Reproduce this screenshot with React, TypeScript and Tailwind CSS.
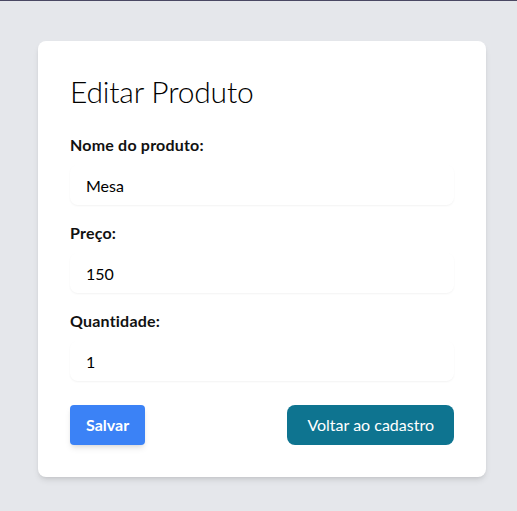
import React from "react";

export default function App() {
  return (
    <div
      className="min-h-[511px] bg-[#e5e7eb] border-t border-[#4a4863] pt-10 pl-[7px] flex justify-center"
      style={{ fontFamily: 'Lato, "Noto Sans", sans-serif' }}
    >
      <div className="w-[448px] h-fit bg-white rounded-lg shadow-md p-8">
        <h1 className="text-3xl font-light text-black mb-6 tracking-[-0.2px]">Editar Produto</h1>
        <div className="mb-4">
          <label className="block font-bold text-[#111] mb-2 tracking-[0.2px]">Nome do produto:</label>
          <input
            className="w-full h-10 px-4 rounded-lg shadow-xs text-black outline-none"
            defaultValue="Mesa"
          />
        </div>
        <div className="mb-4">
          <label className="block font-bold text-[#111] mb-2 tracking-[0.2px]">Preço:</label>
          <input
            className="w-full h-10 px-4 rounded-lg shadow-xs text-black outline-none"
            defaultValue="150"
          />
        </div>
        <div className="mb-6">
          <label className="block font-bold text-[#111] mb-2 tracking-[0.2px]">Quantidade:</label>
          <input
            className="w-full h-10 px-4 rounded-lg shadow-xs text-black outline-none"
            defaultValue="1"
          />
        </div>
        <div className="flex justify-between">
          <button className="h-10 px-4 bg-[#3b82f6] text-white font-bold rounded shadow-md">
            Salvar
          </button>
          <button className="h-10 px-5 bg-[#0e7490] text-white rounded-lg">
            Voltar ao cadastro
          </button>
        </div>
      </div>
    </div>
  );
}
